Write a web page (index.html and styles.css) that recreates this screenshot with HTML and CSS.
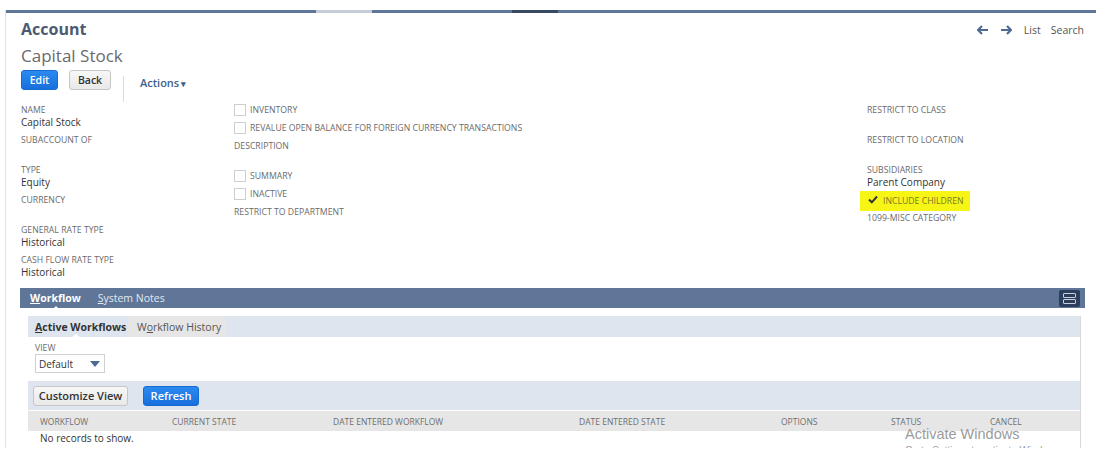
FILE: index.html
```html
<!DOCTYPE html>
<html>
<head>
<meta charset="utf-8">
<link rel="stylesheet" href="styles.css">
</head>
<body>
<div class="page">
  <div class="topbar">
    <div class="seg s1"></div><div class="seg s2"></div><div class="seg s3"></div><div class="seg s4"></div><div class="seg s5"></div>
  </div>
  <div class="header">
    <div class="rectype">Account</div>
    <div class="nav">
      <svg class="arrow" width="12" height="10" viewBox="0 0 12 10"><path d="M5 1 L1 5 L5 9 M1 5 H11" fill="none" stroke="#4f6b94" stroke-width="2.2"/></svg>
      <svg class="arrow" width="12" height="10" viewBox="0 0 12 10"><path d="M7 1 L11 5 L7 9 M11 5 H1" fill="none" stroke="#4f6b94" stroke-width="2.2"/></svg>
      <span class="navlink">List</span>
      <span class="navlink">Search</span>
    </div>
  </div>
  <div class="title">Capital Stock</div>
  <div class="buttons">
    <button class="btn primary">Edit</button>
    <button class="btn secondary">Back</button>
    <span class="divider"></span>
    <span class="actions">Actions<span class="caret">▾</span></span>
  </div>

  <div class="fields">
    <div class="col">
      <div class="field"><div class="label">NAME</div><div class="value">Capital Stock</div></div>
      <div class="field"><div class="label">SUBACCOUNT OF</div><div class="value"></div></div>
      <div class="field"><div class="label">TYPE</div><div class="value">Equity</div></div>
      <div class="field"><div class="label">CURRENCY</div><div class="value"></div></div>
      <div class="field"><div class="label">GENERAL RATE TYPE</div><div class="value">Historical</div></div>
      <div class="field"><div class="label">CASH FLOW RATE TYPE</div><div class="value">Historical</div></div>
    </div>
    <div class="col">
      <div class="cbrow"><span class="box"></span><span class="cblabel">INVENTORY</span></div>
      <div class="cbrow"><span class="box"></span><span class="cblabel">REVALUE OPEN BALANCE FOR FOREIGN CURRENCY TRANSACTIONS</span></div>
      <div class="field"><div class="label">DESCRIPTION</div><div class="value"></div></div>
      <div class="cbrow"><span class="box"></span><span class="cblabel">SUMMARY</span></div>
      <div class="cbrow"><span class="box"></span><span class="cblabel">INACTIVE</span></div>
      <div class="field"><div class="label">RESTRICT TO DEPARTMENT</div><div class="value"></div></div>
    </div>
    <div class="col">
      <div class="field"><div class="label">RESTRICT TO CLASS</div><div class="value"></div></div>
      <div class="field"><div class="label">RESTRICT TO LOCATION</div><div class="value"></div></div>
      <div class="field"><div class="label">SUBSIDIARIES</div><div class="value">Parent Company</div></div>
      <div class="cbrow highlight">
        <svg class="check" width="10" height="9" viewBox="0 0 10 9"><path d="M1 4.5 L3.8 7.3 L9 1.5" fill="none" stroke="#333" stroke-width="2"/></svg>
        <span class="cblabel">INCLUDE CHILDREN</span>
      </div>
      <div class="field"><div class="label">1099-MISC CATEGORY</div><div class="value"></div></div>
    </div>
  </div>

  <div class="subtabs">
    <div class="tabbar">
      <span class="tab active"><u>W</u>orkflow</span>
      <span class="tab"><u>S</u>ystem Notes</span>
      <span class="tabicon"><span class="ic"></span><span class="ic"></span></span>
    </div>
    <div class="panel">
      <div class="ptabs">
        <div class="ptab active"><span class="ptext"><u>A</u>ctive Workflows</span></div>
        <div class="ptab other"><span class="ptext">W<u>o</u>rkflow History</span></div>
      </div>
      <div class="viewarea">
        <div class="label">VIEW</div>
        <div class="select"><span>Default</span><span class="tri"></span></div>
      </div>
      <div class="btnband">
        <button class="btn secondary big">Customize View</button>
        <button class="btn primary big">Refresh</button>
      </div>
      <div class="thead">
        <span>WORKFLOW</span>
        <span>CURRENT STATE</span>
        <span>DATE ENTERED WORKFLOW</span>
        <span>DATE ENTERED STATE</span>
        <span>OPTIONS</span>
        <span>STATUS</span>
        <span>CANCEL</span>
      </div>
      <div class="norec">No records to show.</div>
    </div>
  </div>
  <div class="watermark">Activate Windows<br><span class="wm2">Go to Settings to activate Windows.</span></div>
</div>
</body>
</html>
```

FILE: styles.css
```css
* { box-sizing: border-box; }
html, body { margin: 0; padding: 0; background: #fff; }
body {
  font-family: "Open Sans", "Liberation Sans", sans-serif;
  color: #333;
}
.page {
  margin: 10px 0 0 5px;
  height: 438px;
  border-left: 1px solid #e2e2e2;
  overflow: hidden;
  position: relative;
}
.topbar { display: flex; height: 3px; }
.seg { height: 3px; background: #5f7698; }
.s1 { width: 310px; }
.s2 { width: 56px; background: #c4ccd8; }
.s3 { width: 140px; }
.s4 { width: 46px; background: #394862; }
.s5 { flex: 1; }

.header {
  display: flex;
  justify-content: space-between;
  align-items: center;
  padding: 0 12px 0 15px;
  margin-top: 5px;
  height: 22px;
}
.rectype { font-size: 16px; font-weight: 700; color: #4a5a73; line-height: 22px; }
.nav { display: flex; align-items: center; font-size: 10.5px; color: #555; padding-top: 2px; }
.arrow { margin-right: 11px; }
.arrow + .arrow { margin-right: 12px; }
.navlink { margin-right: 10px; }
.navlink:last-child { margin-right: 0; }

.title {
  margin: 4px 0 0 15px;
  font-size: 17px;
  line-height: 24px;
  color: #6a6a6a;
}
.buttons {
  display: flex;
  align-items: center;
  margin: 2px 0 0 15px;
  height: 20px;
}
.btn {
  font-family: "Open Sans", "Liberation Sans", sans-serif;
  font-size: 10.5px;
  font-weight: 600;
  height: 20px;
  border-radius: 3px;
  padding: 0 10px;
  line-height: 18px;
}
.btn.primary {
  background: linear-gradient(#2b8af0, #1870dc);
  border: 1px solid #166bd3;
  color: #fff;
}
.btn.secondary {
  background: linear-gradient(#f7f7f7, #e9e9e9);
  border: 1px solid #c6c6c6;
  color: #333;
}
.buttons .primary { width: 37px; padding: 0; }
.buttons .secondary { width: 42px; padding: 0; margin-left: 11px; }
.divider {
  width: 1px;
  height: 26px;
  background: #dcdcdc;
  margin: 6px 0 0 12px;
  align-self: flex-start;
}
.actions {
  margin: 5px 0 0 16px;
  font-size: 11px;
  font-weight: 600;
  color: #3f5e8c;
}
.caret { font-size: 9px; margin-left: 2px; }

.fields {
  display: grid;
  grid-template-columns: 213px 633px 1fr;
  margin: 11px 0 0 15px;
}
.field { height: 30px; padding-top: 3px; }
.label {
  font-size: 8.7px;
  line-height: 12px;
  color: #6b6b6b;
  text-transform: uppercase;
}
.value { font-size: 10px; line-height: 12px; height: 12px; color: #333; }
.cbrow { height: 18px; display: flex; align-items: center; }
.box {
  width: 12px;
  height: 12px;
  border: 1px solid #cfcfcf;
  background: #fff;
  margin-right: 4px;
}
.cblabel { font-size: 8.7px; color: #6b6b6b; line-height: 12px; }
.highlight {
  background: #f6f516;
  margin-left: -7px;
  padding-left: 8px;
  width: 110px;
  height: 20px;
  margin-bottom: -2px;
}
.check { margin-right: 5px; margin-top: -3px; }
.highlight .cblabel { color: #7a7a22; }

.subtabs {
  margin: 7px 11px 0 14px;
}
.tabbar {
  background: #5f7698;
  height: 20px;
  display: flex;
  align-items: center;
  padding-left: 10px;
}
.tab { font-size: 10.5px; color: #e3e8f0; margin-right: 17px; }
.tab.active { font-weight: 700; color: #fff; position: relative; }
.tab.active::after {
  content: "";
  position: absolute;
  left: 22px;
  bottom: -5px;
  border: 4px solid transparent;
  border-bottom-color: #fff;
}
.tabicon {
  margin-left: auto;
  margin-right: 5px;
  width: 21px;
  height: 17px;
  background: #2d3e5c;
  border-radius: 2px;
  display: flex;
  flex-direction: column;
  justify-content: center;
  align-items: center;
  gap: 1px;
}
.ic { width: 13px; height: 5px; border: 1.5px solid #c7d0de; border-radius: 1px; }

.panel {
  margin: 8px 4px 0 8px;
  border-right: 1px solid #d9d9d9;
  height: 141px;
}
.ptabs {
  background: #dfe5ee;
  height: 21px;
  display: flex;
  align-items: stretch;
}
.ptab {
  font-size: 10.5px;
  display: flex;
  align-items: center;
  padding: 0 7px;
  white-space: nowrap;
  flex: none;
}
.ptext { display: block; white-space: nowrap; }
.ptab.active { font-weight: 700; color: #333; width: 100px; position: relative; }
.ptab.active::after {
  content: "";
  position: absolute;
  left: 44px;
  bottom: 0;
  border: 4px solid transparent;
  border-bottom-color: #fff;
  border-bottom-width: 3px;
}
.ptab.other { background: #e6e6e6; color: #555; width: 98px; padding-left: 9px; }
.viewarea { height: 44px; padding: 5px 0 0 7px; }
.select {
  width: 70px;
  height: 19px;
  border: 1px solid #d0d0d0;
  display: flex;
  align-items: center;
  justify-content: space-between;
  padding: 0 4px 0 3px;
  font-size: 10px;
  color: #333;
}
.tri {
  width: 0;
  height: 0;
  border-left: 5px solid transparent;
  border-right: 5px solid transparent;
  border-top: 6px solid #4d6a96;
}
.btnband {
  background: #dfe5ee;
  height: 29px;
  display: flex;
  align-items: center;
  padding-left: 5px;
}
.btn.big { font-size: 11px; height: 20px; }
.btnband .secondary { width: 95px; padding: 0; }
.btnband .primary { width: 56px; padding: 0; margin-left: 15px; }
.thead {
  background: #e6e6e6;
  height: 20px;
  margin-top: 1px;
  display: grid;
  grid-template-columns: 132px 161px 246px 202px 110px 99px 1fr;
  align-items: center;
  padding-left: 12px;
  font-size: 8.5px;
  color: #6f6f6f;
}
.norec { font-size: 10px; padding: 0 0 0 12px; line-height: 14px; color: #333; }

.watermark {
  position: absolute;
  left: 899px;
  top: 417px;
  font-family: "Liberation Sans", "Open Sans", sans-serif;
  font-size: 14.5px;
  line-height: 15px;
  color: #9b9b9b;
}
.wm2 { font-size: 10px; }
```
